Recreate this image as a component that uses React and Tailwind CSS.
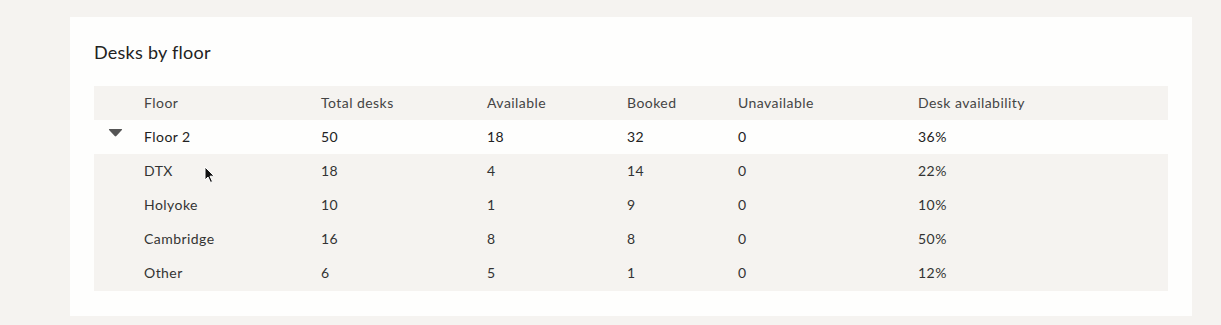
import React from 'react';

const cols = 'grid grid-cols-[50px_177px_166px_140px_111px_180px_1fr] items-center h-[34px] pb-[2px]';

const floor = { name: 'Floor 2', total: 50, available: 18, booked: 32, unavailable: 0, pct: '36%' };

const rooms = [
  { name: 'DTX', total: 18, available: 4, booked: 14, unavailable: 0, pct: '22%' },
  { name: 'Holyoke', total: 10, available: 1, booked: 9, unavailable: 0, pct: '10%' },
  { name: 'Cambridge', total: 16, available: 8, booked: 8, unavailable: 0, pct: '50%' },
  { name: 'Other', total: 6, available: 5, booked: 1, unavailable: 0, pct: '12%' },
];

const Caret = () => (
  <svg width="15" height="9" viewBox="0 0 15 9" className="ml-[14px] -mt-[7px]">
    <path d="M1.5 1 H13.5 Q14.6 1 13.9 2 L8.3 8 Q7.5 8.8 6.7 8 L1.1 2 Q0.4 1 1.5 1 Z" fill="#555555" />
  </svg>
);

const Cursor = () => (
  <svg width="12" height="18" viewBox="0 0 12 18" className="absolute left-[204px] top-[166px]">
    <path d="M1 1 L1 14 L4 11 L6.5 16.5 L8.5 15.5 L6 10.2 L10.2 10.2 Z" fill="#111111" stroke="#ffffff" strokeWidth="1" strokeLinejoin="round" />
  </svg>
);

const Row = ({ r, lead, className }) => (
  <div className={`${cols} ${className}`}>
    <div>{lead}</div>
    <div>{r.name}</div>
    <div>{r.total}</div>
    <div>{r.available}</div>
    <div>{r.booked}</div>
    <div>{r.unavailable}</div>
    <div>{r.pct}</div>
  </div>
);

export default function App() {
  return (
    <div className="relative min-h-screen bg-[#f5f3f0] pt-[17px] pl-[70px] pr-[29px] h-[325px] overflow-hidden" style={{ fontFamily: 'Lato, "Noto Sans", sans-serif' }}>
      <div className="bg-[#fefefd] h-[299px] px-6 pt-[23px]">
        <h2 className="text-[18px] leading-6 text-[#222222] tracking-[0.25px]">Desks by floor</h2>
        <div className="mt-[22px] text-[14px] tracking-[0.45px] text-[#333333]">
          <div className={`${cols} bg-[#f5f3f0] text-[#444444]`}>
            <div />
            <div>Floor</div>
            <div>Total desks</div>
            <div>Available</div>
            <div>Booked</div>
            <div>Unavailable</div>
            <div>Desk availability</div>
          </div>
          <Row r={floor} lead={<Caret />} className="bg-[#fefefd] text-[#222222]" />
          <div className="bg-[#f5f3f0] pb-px">
            {rooms.map((r) => (
              <Row key={r.name} r={r} className="" />
            ))}
          </div>
        </div>
      </div>
      <Cursor />
    </div>
  );
}
